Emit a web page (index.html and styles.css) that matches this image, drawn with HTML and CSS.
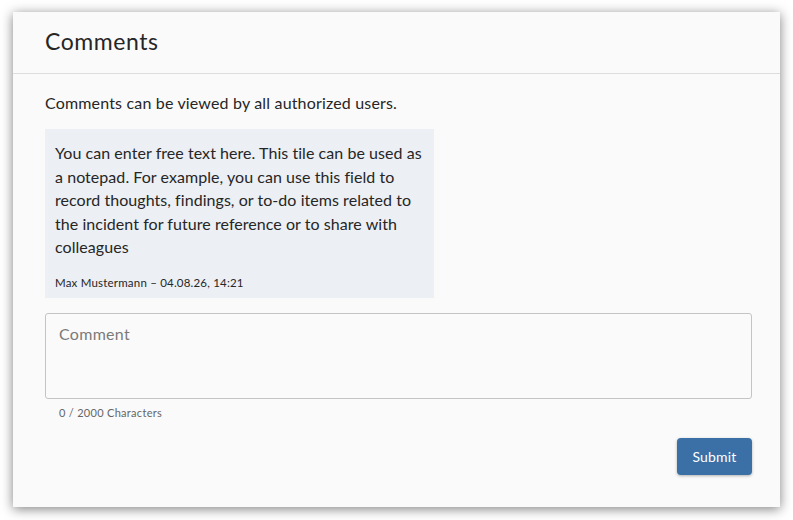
FILE: index.html
```html
<!DOCTYPE html>
<html lang="en">
<head>
<meta charset="utf-8">
<title>Comments</title>
<link rel="stylesheet" href="styles.css">
</head>
<body>
<section class="card">
  <header class="card-header">
    <h1 class="card-title">Comments</h1>
  </header>
  <div class="card-body">
    <p class="intro">Comments can be viewed by all authorized users.</p>
    <div class="tile">
      <p class="tile-text">You can enter free text here. This tile can be used as a notepad. For example, you can use this field to record thoughts, findings, or to-do items related to the incident for future reference or to share with colleagues</p>
      <p class="tile-meta">Max Mustermann – 04.08.26, 14:21</p>
    </div>
    <textarea class="comment-input" placeholder="Comment"></textarea>
    <div class="counter">0 / 2000 Characters</div>
    <div class="actions">
      <button class="btn-submit" type="button">Submit</button>
    </div>
  </div>
</section>
</body>
</html>
```
FILE: styles.css
```css
* { box-sizing: border-box; }
html, body { margin: 0; background: #ffffff; }
body {
  padding: 12px 13px 13px 13px;
  font-family: "Lato", "Noto Sans", sans-serif;
  color: #262626;
}
.card {
  width: 767px;
  height: 495px;
  background: #fafafa;
  box-shadow: 0 2px 11px rgba(0,0,0,0.5);
}
.card-header {
  height: 62px;
  border-bottom: 1px solid #dddddd;
  padding: 0 32px 3px 32px;
  display: flex;
  align-items: center;
}
.card-title {
  margin: 0;
  font-size: 23px;
  font-weight: 400;
  letter-spacing: 0.55px;
  color: #262626;
}
.card-body {
  padding: 17px 28px 0 32px;
}
.intro {
  margin: 0;
  font-size: 16px;
  line-height: 24px;
  letter-spacing: 0.17px;
}
.tile {
  margin-top: 14px;
  width: 389px;
  background: #eceff4;
  padding: 12px 10px 7px 10px;
}
.tile-text {
  margin: 0;
  font-size: 16px;
  line-height: 23.5px;
  letter-spacing: 0.05px;
}
.tile-meta {
  margin: 16px 0 0 0;
  font-size: 11.5px;
  line-height: 16px;
  letter-spacing: 0.2px;
}
.comment-input {
  display: block;
  margin-top: 15px;
  width: 100%;
  height: 86px;
  resize: none;
  border: 1px solid #c4c4c4;
  border-radius: 3px;
  background: #fafafa;
  padding: 9px 13px;
  font-family: inherit;
  font-size: 16px;
  line-height: 22px;
  color: #262626;
}
.comment-input::placeholder { color: #7a7a7a; letter-spacing: 0.3px; }
.counter {
  margin-top: 6px;
  padding-left: 14px;
  font-size: 11px;
  line-height: 16px;
  color: #666666;
  letter-spacing: 0.3px;
}
.actions {
  display: flex;
  justify-content: flex-end;
  margin-top: 17px;
}
.btn-submit {
  width: 75px;
  height: 37px;
  border: none;
  border-radius: 4px;
  background: #3a70a6;
  color: #ffffff;
  font-family: inherit;
  font-size: 14px;
  letter-spacing: 0.2px;
  box-shadow: 0 1px 3px rgba(0,0,0,0.3);
}
```
